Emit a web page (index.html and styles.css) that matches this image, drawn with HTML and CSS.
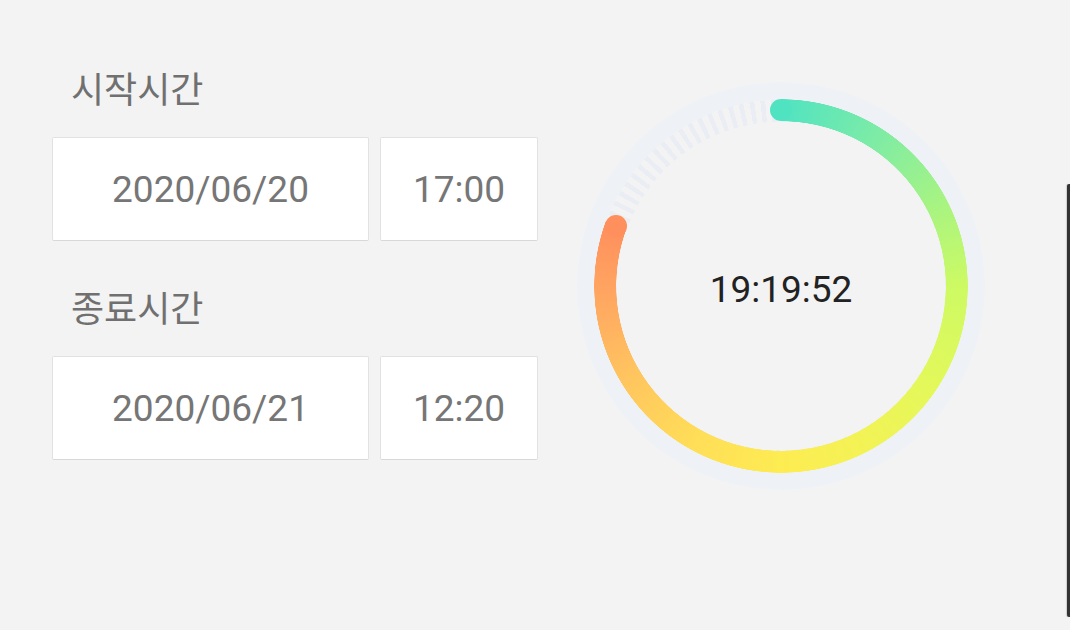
FILE: index.html
```html
<!DOCTYPE html>
<html lang="ko">
<head>
<meta charset="utf-8">
<title>Timer</title>
<link rel="stylesheet" href="styles.css">
</head>
<body>
<div class="screen">
  <div class="form">
    <div class="field">
      <div class="label">시작시간</div>
      <div class="inputs">
        <div class="box date">2020/06/20</div>
        <div class="box time">17:00</div>
      </div>
    </div>
    <div class="field">
      <div class="label">종료시간</div>
      <div class="inputs">
        <div class="box date">2020/06/21</div>
        <div class="box time">12:20</div>
      </div>
    </div>
  </div>
  <div class="dial">
    <div class="layer ticks"></div>
    <div class="layer arc"></div>
    <span class="cap cap-start"></span>
    <span class="cap cap-end"></span>
    <div class="layer clock">19:19:52</div>
  </div>
  <div class="edge"></div>
</div>
</body>
</html>
```

FILE: styles.css
```css
html, body {
  margin: 0;
  padding: 0;
}
body {
  background: #f3f3f3;
  width: 1070px;
  height: 630px;
  overflow: hidden;
  font-family: Roboto, "Noto Sans CJK KR", sans-serif;
}
.screen {
  display: flex;
  align-items: flex-start;
  padding-left: 52px;
  height: 630px;
  box-sizing: border-box;
}
.form {
  width: 486px;
  display: flex;
  flex-direction: column;
  gap: 45px;
  padding-top: 67px;
}
.field {
  display: flex;
  flex-direction: column;
  gap: 30px;
}
.label {
  font-family: "Noto Sans CJK KR", sans-serif;
  font-size: 36px;
  line-height: 40px;
  color: #707070;
  padding-left: 19px;
}
.inputs {
  display: flex;
  gap: 11px;
}
.box {
  height: 104px;
  box-sizing: border-box;
  background: #ffffff;
  border: 1px solid #e2e2e2;
  border-bottom-color: #d8d8d8;
  border-radius: 2px;
  display: flex;
  align-items: center;
  justify-content: center;
  font-family: Roboto, sans-serif;
  font-size: 37px;
  color: #767676;
}
.date { width: 317px; }
.time { width: 158px; }

.dial {
  position: relative;
  width: 408px;
  height: 408px;
  margin-top: 82px;
  margin-left: 39px;
  border-radius: 50%;
  background: radial-gradient(circle at center, rgba(238,242,247,0) 186px, #eef2f7 186.5px, #eef2f7 203.5px, rgba(238,242,247,0) 204px);
  display: grid;
}
.layer {
  grid-area: 1 / 1;
  width: 408px;
  height: 408px;
  border-radius: 50%;
}
.ticks {
  background: repeating-conic-gradient(from 0deg, #eaeef4 0deg 1.5deg, rgba(234,238,244,0) 1.5deg 3.4deg);
  -webkit-mask: radial-gradient(circle at center, transparent 164px, #000 164.5px, #000 186px, transparent 186.5px);
  mask: radial-gradient(circle at center, transparent 164px, #000 164.5px, #000 186px, transparent 186.5px);
}
.arc {
  background: conic-gradient(from 0deg,
    #50e3c2 0deg,
    #7aeba8 30deg,
    #a4f385 60deg,
    #cdfa63 90deg,
    #e4f85a 125deg,
    #f4f255 155deg,
    #fdec52 180deg,
    #ffdd58 210deg,
    #ffc45f 240deg,
    #ffa861 265deg,
    #ff8f5d 290deg,
    transparent 290deg);
  -webkit-mask: radial-gradient(circle at center, transparent 164.5px, #000 165px, #000 186.5px, transparent 187px);
  mask: radial-gradient(circle at center, transparent 164.5px, #000 165px, #000 186.5px, transparent 187px);
}
.cap {
  position: absolute;
  width: 22px;
  height: 22px;
  border-radius: 50%;
}
.cap-start {
  left: 193px;
  top: 17px;
  background: #50e3c2;
}
.cap-end {
  left: 27.6px;
  top: 132.8px;
  background: #ff8f5d;
}
.clock {
  display: flex;
  align-items: center;
  justify-content: center;
  font-family: Roboto, sans-serif;
  font-size: 37px;
  color: #222222;
  padding-top: 6px;
  box-sizing: border-box;
}
.edge {
  width: 3px;
  height: 433px;
  margin-top: 184px;
  margin-left: 82px;
  background: #333333;
  border-radius: 2px 0 0 2px;
  box-shadow: -1px 0 1px rgba(0,0,0,0.15);
}
```
